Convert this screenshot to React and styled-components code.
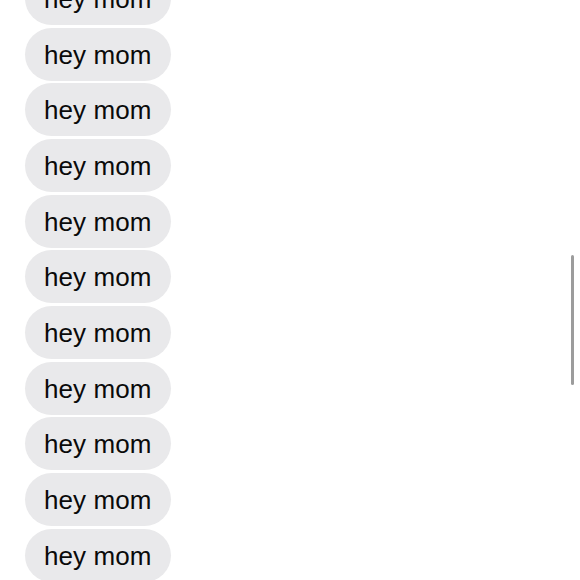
import styled, { createGlobalStyle } from "styled-components";

const Global = createGlobalStyle`
	html, body {
		margin: 0;
		padding: 0;
		background: #ffffff;
	}
	body {
		font-family: "Liberation Sans", Arial, sans-serif;
	}
`;

const messages = Array.from({ length: 11 }, () => "hey mom");

export default function App() {
	return (
		<>
			<Global />
			<Screen>
				<Thread>
					{messages.map((text, i) => (
						<Row key={i}>
							<Bubble>{text}</Bubble>
						</Row>
					))}
				</Thread>
				<ScrollThumb />
			</Screen>
		</>
	);
}

const Screen = styled.div`
	position: relative;
	width: 580px;
	height: 580px;
	overflow: hidden;
	background: #ffffff;
`;

const Thread = styled.div`
	display: flex;
	flex-direction: column;
	gap: 2.67px;
	margin-top: -28px;
	padding-left: 25px;
`;

const Row = styled.div`
	display: flex;
	justify-content: flex-start;
`;

const Bubble = styled.div`
	display: flex;
	align-items: center;
	box-sizing: border-box;
	height: 53px;
	padding: 2px 19px 0 19px;
	border-radius: 27px;
	background: #e9e9eb;
	color: #0a0a0a;
	font-size: 26px;
	letter-spacing: 0.1px;
	white-space: nowrap;
`;

const ScrollThumb = styled.div`
	position: absolute;
	right: 6px;
	top: 255px;
	width: 3px;
	height: 130px;
	border-radius: 2px;
	background: #9c9c9c;
`;
